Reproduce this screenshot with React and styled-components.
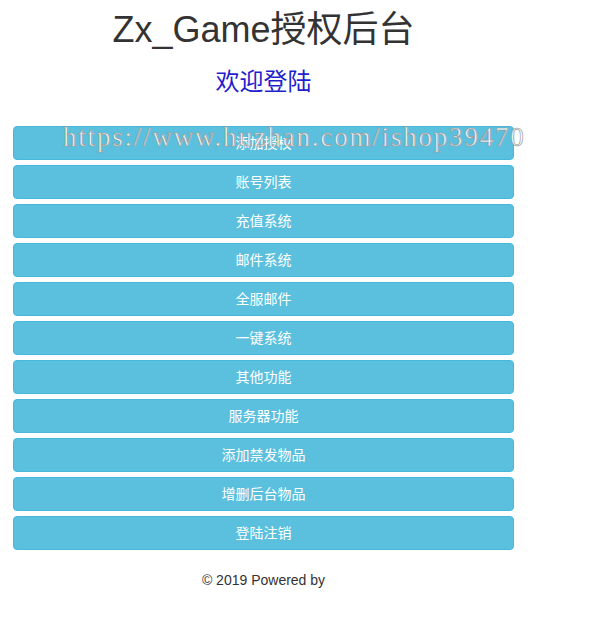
import React from "react";
import styled, { createGlobalStyle } from "styled-components";

const GlobalStyle = createGlobalStyle`
  html, body {
    margin: 0;
    padding: 0;
    background: #fff;
  }
  body {
    font-family: "Liberation Sans", Arial, "Noto Sans CJK SC", sans-serif;
    font-size: 14px;
    color: #333;
  }
`;

const Page = styled.div`
  position: relative;
  width: 501px;
  margin-left: 13px;
  padding-top: 7px;
  padding-bottom: 30px;
`;

const Title = styled.h1`
  margin: 0;
  text-align: center;
  font-size: 36px;
  font-weight: 400;
  line-height: 46px;
  color: #333;
`;

const Welcome = styled.h2`
  margin: 14px 0 0;
  text-align: center;
  font-size: 24px;
  font-weight: 400;
  line-height: 30px;
  color: #1f1fcc;
`;

const Menu = styled.div`
  display: flex;
  flex-direction: column;
  gap: 5px;
  margin-top: 29px;
`;

const MenuButton = styled.button`
  display: block;
  width: 100%;
  height: 34px;
  padding: 6px 12px;
  border: 1px solid #46b8da;
  border-radius: 4px;
  background: #5bc0de;
  color: #fff;
  font-family: "Liberation Sans", Arial, "Noto Sans CJK SC", sans-serif;
  font-size: 14px;
  line-height: 20px;
  text-align: center;
  cursor: pointer;
`;

const Footer = styled.footer`
  margin-top: 20px;
  text-align: center;
  font-size: 14px;
  line-height: 20px;
  color: #333;
`;

const Watermark = styled.div`
  position: absolute;
  left: 50px;
  top: 122px;
  font-family: "Liberation Serif", "Times New Roman", serif;
  font-size: 27px;
  letter-spacing: 1.8px;
  white-space: nowrap;
  color: rgba(255, 255, 255, 0.85);
  -webkit-text-stroke: 0.7px #9a9a9a;
  pointer-events: none;
`;

const items = [
  "添加授权",
  "账号列表",
  "充值系统",
  "邮件系统",
  "全服邮件",
  "一键系统",
  "其他功能",
  "服务器功能",
  "添加禁发物品",
  "增删后台物品",
  "登陆注销",
];

export default function App() {
  return (
    <Page>
      <GlobalStyle />
      <Title>Zx_Game授权后台</Title>
      <Welcome>欢迎登陆</Welcome>
      <Menu>
        {items.map((label) => (
          <MenuButton key={label}>{label}</MenuButton>
        ))}
      </Menu>
      <Footer>© 2019 Powered by</Footer>
      <Watermark>https://www.huzhan.com/ishop39470</Watermark>
    </Page>
  );
}
